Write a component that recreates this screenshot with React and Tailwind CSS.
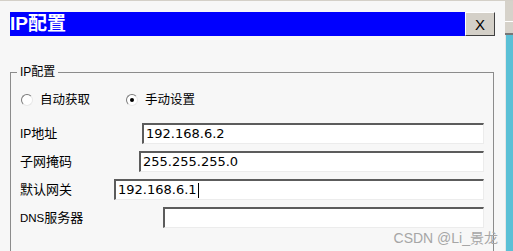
const cjk = { fontFamily: '"Liberation Sans", "Noto Sans CJK SC", sans-serif' };

const Radio = ({ checked, label }) => (
  <div className="flex items-center">
    <span className="flex h-[12px] w-[12px] items-center justify-center rounded-full border border-t-[#7a7a7a] border-l-[#7a7a7a] border-b-[#e8e8e8] border-r-[#e8e8e8] bg-white">
      {checked && <span className="h-[4px] w-[4px] rounded-full bg-black" />}
    </span>
    <span className="ml-[7px] text-[12.5px] leading-[16px] text-black">{label}</span>
  </div>
);

const Row = ({ label, labelW, value, cursor }) => (
  <div className="flex h-[21px] items-center">
    <div className={`${labelW} shrink-0 text-[13px] leading-[16px] text-black`}>{label}</div>
    <div className="flex h-[21px] flex-1 items-center border-t-2 border-l-2 border-b border-r border-t-[#5c5c5c] border-l-[#5c5c5c] border-b-[#ececec] border-r-[#ececec] bg-white pl-[2px]">
      <span className="text-[13px] leading-[16px] text-black" style={{ fontFamily: '"DejaVu Sans", sans-serif' }}>
        {value}
      </span>
      {cursor && <span className="ml-px h-[15px] w-px bg-black" />}
    </div>
  </div>
);

export default function App() {
  return (
    <div className="flex h-[251px] w-[513px] flex-col overflow-hidden bg-[#f7f7f7]" style={cjk}>
      <div className="h-px w-full shrink-0 bg-[#d4d0c8]" />
      <div className="relative flex min-h-0 flex-1 overflow-hidden">
        <div className="w-[505px] shrink-0 pl-[10px] pt-[11px]">
          <div className="flex h-[24px]">
            <div className="flex w-[455px] items-center bg-[#0000ff]">
              <span className="text-[19px] font-bold leading-[24px] text-white">IP配置</span>
            </div>
            <button className="flex h-[24px] w-[30px] items-center justify-center border border-t-white border-l-white border-b-[#404040] border-r-[#404040] bg-[#d4d0c8] text-[15px] leading-none text-black">
              X
            </button>
          </div>

          <fieldset className="mt-[28px] h-[200px] w-[484px] border border-[#8c8c8c] pl-[6px] pr-[9px] pt-[12px]">
            <legend className="px-[3px] text-[12px] leading-[16px] text-black">IP配置</legend>
            <div className="flex h-[16px] items-center pl-[4px]">
              <Radio label="自动获取" />
              <div className="ml-[36px]">
                <Radio checked label="手动设置" />
              </div>
            </div>
            <div className="mt-[15px] flex flex-col gap-[7px] pl-[3px]">
              <Row label={<><span className="text-[12px]">IP</span>地址</>} labelW="w-[122px]" value="192.168.6.2" />
              <Row label="子网掩码" labelW="w-[119px]" value="255.255.255.0" />
              <Row label="默认网关" labelW="w-[94px]" value="192.168.6.1" cursor />
              <Row label={<><span className="text-[11.5px]">DNS</span>服务器</>} labelW="w-[143px]" value="" />
            </div>
          </fieldset>
        </div>

        <div className="flex flex-1 flex-col">
          <div className="h-[20px] bg-[#d6d2ca]" />
          <div className="h-px bg-white" />
          <div className="h-[11px] bg-[#d6d2ca]" />
          <div className="h-[2px] bg-[#777777]" />
          <div className="flex-1 border-l border-l-[#e6e6e6] bg-[#5bc0d6]" />
        </div>

        <span className="absolute bottom-[5px] right-[15px] text-[14px] leading-[16px] text-[#a6a6a6]">
          CSDN @Li_景龙
        </span>
      </div>
    </div>
  );
}
